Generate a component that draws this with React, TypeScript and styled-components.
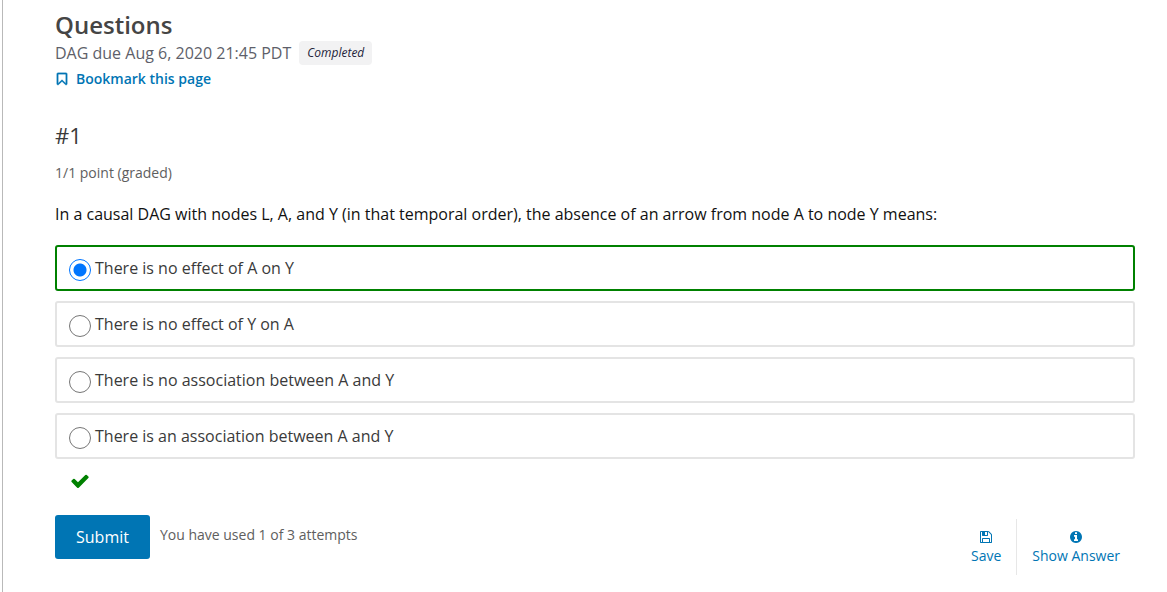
import React, { useState } from "react";
import styled, { createGlobalStyle } from "styled-components";

const GlobalStyle = createGlobalStyle`
  *, *::before, *::after { box-sizing: border-box; }
  body {
    margin: 0;
    background: #fff;
    color: #3a3a3a;
    font: 16px/24px "Open Sans", "Noto Sans", sans-serif;
  }
  button { font: inherit; cursor: pointer; }
`;

const Page = styled.main`
  min-height: 100vh;
  margin-left: 2px;
  padding: 8px 32px 16px 52px;
  border-left: 1px solid #b9b9b9;
`;

const Title = styled.h1`
  margin: 0;
  font-size: 24px;
  line-height: 33px;
  font-weight: 600;
  color: #454545;
`;

const DueRow = styled.div`
  display: flex;
  align-items: center;
  gap: 8px;
  color: #5e5f6a;
`;

const Badge = styled.span`
  padding: 0 8px;
  border-radius: 4px;
  background: #f2f2f3;
  color: #23233a;
  font-size: 12px;
  line-height: 24px;
  font-style: italic;
`;

const BookmarkButton = styled.button`
  display: flex;
  align-items: center;
  gap: 7px;
  margin-top: 3px;
  padding: 0;
  border: 0;
  background: none;
  color: #0075b4;
  font-size: 14px;
  line-height: 22px;
  font-weight: 600;
`;

const Icon = styled.svg<{ $size: number }>`
  display: block;
  width: ${(p) => p.$size}px;
  height: ${(p) => p.$size}px;
  fill: currentColor;
`;

const ProblemTitle = styled.h2`
  margin: 29px 0 0;
  font-size: 22px;
  line-height: 32px;
  font-weight: 400;
`;

const Progress = styled.p`
  margin: 11px 0 0;
  font-size: 14px;
  line-height: 22px;
  color: #5e5e5e;
`;

const Choices = styled.fieldset`
  display: flex;
  flex-direction: column;
  gap: 10px;
  min-width: 0;
  margin: 18px 0 0;
  padding: 0;
  border: 0;
`;

const Prompt = styled.legend`
  margin-bottom: 19px;
  padding: 0;
  color: #111;
`;

const Choice = styled.label<{ $correct: boolean }>`
  display: flex;
  align-items: center;
  gap: 4px;
  min-height: 46px;
  padding: 0 12px;
  border: 2px solid ${(p) => (p.$correct ? "#008100" : "#e4e4e4")};
  border-radius: 3px;
`;

const Radio = styled.input`
  appearance: none;
  flex: none;
  width: 22px;
  height: 22px;
  margin: 3px 0 0;
  border: 1px solid #767676;
  border-radius: 50%;
  background: #fff;

  &:checked {
    border-color: #0075ff;
    background: radial-gradient(circle, #0075ff 6px, #fff 7px);
  }
`;

const Status = styled.div`
  margin-top: 12px;
  padding-left: 15px;
  color: #008100;
`;

const Actions = styled.div`
  display: flex;
  align-items: flex-start;
  gap: 10px;
  margin-top: 24px;
`;

const Submit = styled.button`
  min-height: 44px;
  padding: 0 21px;
  border: 0;
  border-radius: 3px;
  background: #0075b4;
  color: #fff;
`;

const Attempts = styled.p`
  margin: 9px 0 0;
  font-size: 14px;
  line-height: 22px;
  color: #5e5e5e;
`;

const Tools = styled.div`
  display: flex;
  margin: 4px 0 0 auto;
`;

const Tool = styled.button`
  display: flex;
  flex-direction: column;
  align-items: center;
  gap: 1px;
  min-height: 56px;
  padding: 11px 15px 0;
  border: 0;
  background: none;
  color: #0075b4;
  font-size: 14px;
  line-height: 22px;

  & + & { border-left: 1px solid #e7e7e7; }
`;

const paths = {
  bookmark:
    "M1408 256h-1024v1242l423-406 89-85 89 85 423 406v-1242zm12-128q23 0 44 9 33 13 52.5 41t19.5 62v1289q0 34-19.5 62t-52.5 41q-19 8-44 8-48 0-83-32l-441-424-441 424q-36 33-83 33-23 0-44-9-33-13-52.5-41t-19.5-62v-1289q0-34 19.5-62t52.5-41q21-9 44-9h1048z",
  check:
    "M1671 566q0 40-28 68l-724 724-136 136q-28 28-68 28t-68-28l-136-136-362-362q-28-28-28-68t28-68l136-136q28-28 68-28t68 28l294 295 656-657q28-28 68-28t68 28l136 136q28 28 28 68z",
  save:
    "M512 1536h768v-384h-768v384zm896 0h128v-896q0-14-10-38.5t-20-34.5l-281-281q-10-10-34-20t-39-10v416q0 40-28 68t-68 28h-576q-40 0-68-28t-28-68v-416h-128v1280h128v-416q0-40 28-68t68-28h832q40 0 68 28t28 68v416zm-384-928v-320q0-13-9.5-22.5t-22.5-9.5h-192q-13 0-22.5 9.5t-9.5 22.5v320q0 13 9.5 22.5t22.5 9.5h192q13 0 22.5-9.5t9.5-22.5zm640 32v928q0 40-28 68t-68 28h-1344q-40 0-68-28t-28-68v-1344q0-40 28-68t68-28h928q40 0 88 20t76 48l280 280q28 28 48 76t20 88z",
  info:
    "M1152 1376v-160q0-14-9-23t-23-9h-96v-512q0-14-9-23t-23-9h-320q-14 0-23 9t-9 23v160q0 14 9 23t23 9h96v320h-96q-14 0-23 9t-9 23v160q0 14 9 23t23 9h448q14 0 23-9t9-23zm-128-896v-160q0-14-9-23t-23-9h-192q-14 0-23 9t-9 23v160q0 14 9 23t23 9h192q14 0 23-9t9-23zm640 416q0 209-103 385.5t-279.5 279.5-385.5 103-385.5-103-279.5-279.5-103-385.5 103-385.5 279.5-279.5 385.5-103 385.5 103 279.5 279.5 103 385.5z",
};

const strokes: Partial<Record<keyof typeof paths, number>> = { bookmark: 100 };

function Glyph({ name, size }: { name: keyof typeof paths; size: number }) {
  return (
    <Icon $size={size} viewBox="0 0 1792 1792" aria-hidden="true">
      <path d={paths[name]} stroke="currentColor" strokeWidth={strokes[name] ?? 0} />
    </Icon>
  );
}

const answers = [
  "There is no effect of A on Y",
  "There is no effect of Y on A",
  "There is no association between A and Y",
  "There is an association between A and Y",
];
const correctAnswer = 0;

export default function App() {
  const [selected, setSelected] = useState(correctAnswer);

  return (
    <>
      <GlobalStyle />
      <Page>
        <Title>Questions</Title>
        <DueRow>
          <span>DAG due Aug 6, 2020 21:45 PDT</span>
          <Badge>Completed</Badge>
        </DueRow>
        <BookmarkButton type="button">
          <Glyph name="bookmark" size={14} />
          Bookmark this page
        </BookmarkButton>

        <ProblemTitle>#1</ProblemTitle>
        <Progress>1/1 point (graded)</Progress>

        <form onSubmit={(e) => e.preventDefault()}>
          <Choices>
            <Prompt>
              In a causal DAG with nodes L, A, and Y (in that temporal order), the absence of an
              arrow from node A to node Y means:
            </Prompt>
            {answers.map((text, i) => (
              <Choice
                key={text}
                htmlFor={`answer-${i}`}
                $correct={i === selected && i === correctAnswer}
              >
                <Radio
                  id={`answer-${i}`}
                  type="radio"
                  name="answer"
                  checked={i === selected}
                  onChange={() => setSelected(i)}
                />
                <span>{text}</span>
              </Choice>
            ))}
          </Choices>
          <Status role="img" aria-label="Correct">
            <Glyph name="check" size={20} />
          </Status>
          <Actions>
            <Submit type="submit">Submit</Submit>
            <Attempts>You have used 1 of 3 attempts</Attempts>
            <Tools>
              <Tool type="button">
                <Glyph name="save" size={14} />
                Save
              </Tool>
              <Tool type="button">
                <Glyph name="info" size={14} />
                Show Answer
              </Tool>
            </Tools>
          </Actions>
        </form>
      </Page>
    </>
  );
}
